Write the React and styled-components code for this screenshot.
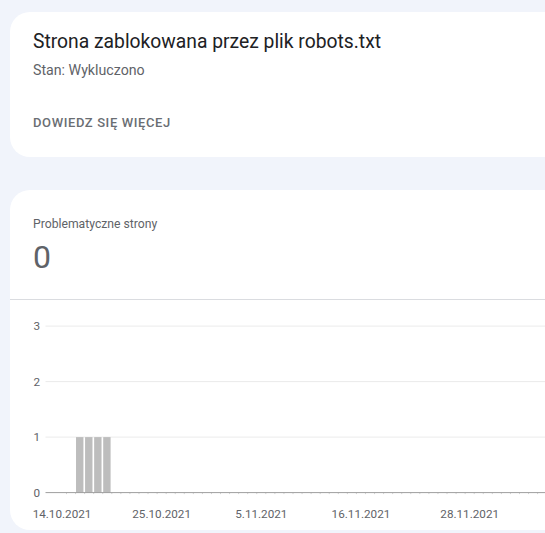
import React from 'react';
import styled, { createGlobalStyle } from 'styled-components';

const GlobalStyle = createGlobalStyle`
  html, body {
    margin: 0;
    padding: 0;
    background: #f1f4fb;
    overflow: hidden;
  }
  body {
    font-family: Roboto, "Noto Sans", Arial, sans-serif;
  }
`;

const Page = styled.div`
  display: flex;
  flex-direction: column;
  gap: 33px;
  padding: 12px 0 0 10px;
`;

const Card = styled.div`
  background: #ffffff;
  border-radius: 20px;
  width: calc(100% + 40px);
  box-sizing: border-box;
  overflow: hidden;
`;

const IssueCard = styled(Card)`
  padding: 16px 23px 24px;
`;

const Title = styled.h1`
  margin: 0;
  font-size: 19.3px;
  line-height: 28px;
  font-weight: 400;
  color: #202124;
`;

const Status = styled.div`
  margin-top: 4px;
  font-size: 14.2px;
  line-height: 20px;
  color: #5f6368;
`;

const LearnMore = styled.div`
  margin-top: 33px;
  font-size: 13px;
  line-height: 20px;
  font-weight: 500;
  letter-spacing: 0.6px;
  color: #6a6e73;
  text-transform: uppercase;
`;

const ChartCard = styled(Card)`
  height: 340px;
`;

const Summary = styled.div`
  padding: 26px 23px 22px;
  border-bottom: 1px solid #dadce0;
`;

const SummaryLabel = styled.div`
  font-size: 12.2px;
  line-height: 16px;
  color: #5f6368;
`;

const SummaryValue = styled.div`
  margin-top: 5px;
  font-size: 32px;
  line-height: 40px;
  color: #5f6368;
`;

const ChartSvg = styled.svg`
  display: block;
  font-family: Roboto, "Noto Sans", Arial, sans-serif;
  font-size: 11.7px;
`;

const DAY = 9.06;
const X0 = 52; // centre of 14.10.2021, relative to card
const yFor = (v) => 192.6 - v * 55.5;
const values = [0, 0, 1, 1, 1, 1];
const totalDays = 62;
const xLabels = [
  { i: 0, t: '14.10.2021' },
  { i: 11, t: '25.10.2021' },
  { i: 22, t: '5.11.2021' },
  { i: 33, t: '16.11.2021' },
  { i: 45, t: '28.11.2021' },
];

function Chart() {
  const ticks = [];
  for (let i = 0; i < totalDays; i++) ticks.push(X0 + i * DAY + 4.5);
  return (
    <ChartSvg width="560" height="230" viewBox="0 0 560 230">
      {[1, 2, 3].map((v) => (
        <line key={v} x1="35.5" x2="560" y1={yFor(v)} y2={yFor(v)} stroke="#ebebeb" strokeWidth="1" />
      ))}
      {[0, 1, 2, 3].map((v) => (
        <text key={v} x="30" y={yFor(v) + 4.3} textAnchor="end" fill="#5f6368">{v}</text>
      ))}
      {values.map((v, i) =>
        v > 0 ? (
          <rect key={i} x={X0 + i * DAY - 4.1} y={yFor(v)} width="7.4" height={v * 55.5} fill="#bdbdbd" />
        ) : null
      )}
      {ticks.map((x, i) => (
        <line key={i} x1={x} x2={x} y1={yFor(0)} y2={yFor(0) + 1.5} stroke="#d4d4d4" strokeWidth="1" />
      ))}
      <line x1="35.5" x2="560" y1={yFor(0)} y2={yFor(0)} stroke="#9e9e9e" strokeWidth="1" />
      {xLabels.map((l) => (
        <text key={l.t} x={X0 + l.i * DAY} y="218" textAnchor="middle" fill="#5f6368">{l.t}</text>
      ))}
    </ChartSvg>
  );
}

export default function App() {
  return (
    <>
      <GlobalStyle />
      <Page>
        <IssueCard>
          <Title>Strona zablokowana przez plik robots.txt</Title>
          <Status>Stan: Wykluczono</Status>
          <LearnMore>Dowiedz się więcej</LearnMore>
        </IssueCard>
        <ChartCard>
          <Summary>
            <SummaryLabel>Problematyczne strony</SummaryLabel>
            <SummaryValue>0</SummaryValue>
          </Summary>
          <Chart />
        </ChartCard>
      </Page>
    </>
  );
}
